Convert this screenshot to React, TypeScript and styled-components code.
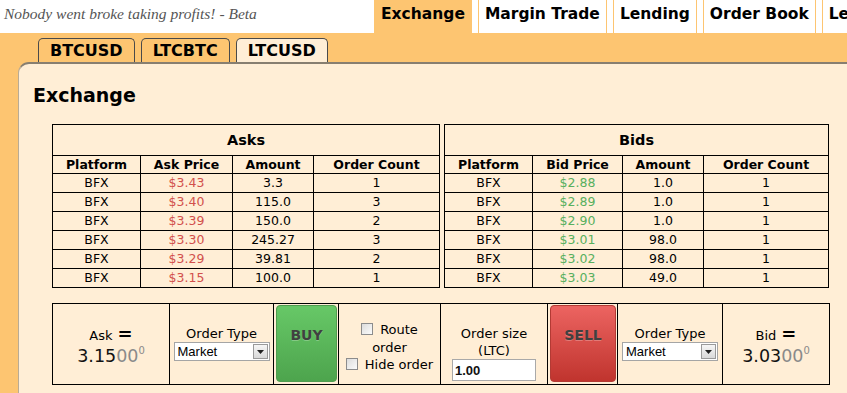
import React from 'react'
import styled, { createGlobalStyle } from 'styled-components'

const ORANGE = '#fdc571'
const CREAM = '#ffeed6'

const GlobalStyle = createGlobalStyle`
  html, body {
    margin: 0;
    padding: 0;
    background: ${ORANGE};
  }
  body {
    font-family: "DejaVu Sans", Verdana, sans-serif;
    color: #000;
    overflow: hidden;
  }
`

const Page = styled.div`
  width: 847px;
  height: 393px;
  overflow: hidden;
  background: ${ORANGE};
`

const TopBar = styled.div`
  display: flex;
  height: 33px;
  background: #fff;
  overflow: hidden;
`

const Tagline = styled.div`
  width: 374px;
  flex: none;
  box-sizing: border-box;
  padding-left: 4px;
  font-family: "Liberation Serif", "Times New Roman", serif;
  font-style: italic;
  font-size: 15.5px;
  line-height: 28px;
  color: #555;
  white-space: nowrap;
`

const NavTabs = styled.div`
  display: flex;
  gap: 6px;
`

const NavTab = styled.div<{ $active?: boolean }>`
  flex: none;
  padding: 0 6px;
  border-left: 1px solid ${ORANGE};
  border-right: 1px solid ${ORANGE};
  background: ${({ $active }) => ($active ? ORANGE : '#fff')};
  font-weight: bold;
  font-size: 15.5px;
  line-height: 29px;
  white-space: nowrap;
`

const SubBar = styled.div`
  display: flex;
  align-items: flex-end;
  gap: 6px;
  height: 29px;
  padding-left: 38px;
`

const SubTab = styled.div<{ $active?: boolean }>`
  height: 23px;
  padding: 0 11px;
  border: 1px solid #4a4a4a;
  border-bottom: none;
  border-radius: 5px 5px 0 0;
  background: ${({ $active }) => ($active ? CREAM : ORANGE)};
  font-weight: bold;
  font-size: 16px;
  line-height: 23px;
`

const Panel = styled.div`
  margin-left: 18px;
  height: 331px;
  box-sizing: border-box;
  padding-top: 20px;
  background: ${CREAM};
  border-top: 2px solid #877e70;
  border-left: 1px solid #b9ab94;
  border-top-left-radius: 11px;
`

const Heading = styled.h2`
  margin: 0 0 18px 14px;
  font-size: 19px;
  line-height: 22px;
  font-weight: bold;
`

const BooksRow = styled.div`
  display: flex;
  gap: 4px;
  padding-left: 33px;
`

const BookTable = styled.table<{ $width: number }>`
  width: ${({ $width }) => $width}px;
  border-collapse: collapse;
  table-layout: fixed;
  font-size: 12.5px;

  th, td {
    border: 1px solid #000;
    padding: 0;
    text-align: center;
  }
`

const TitleCell = styled.th`
  height: 30px;
  font-size: 14.5px;
`

const ColHead = styled.th`
  height: 17px;
  line-height: 15px;
  font-size: 12.5px;
`

const DataCell = styled.td<{ $tone?: 'ask' | 'bid' }>`
  height: 18px;
  line-height: 16px;
  color: ${({ $tone }) => ($tone === 'ask' ? '#d2504c' : $tone === 'bid' ? '#58b05e' : '#000')};
`

const OrderTable = styled.table`
  margin: 15px 0 0 33px;
  width: 777px;
  border-collapse: collapse;
  table-layout: fixed;
  font-size: 13px;

  td {
    border: 1px solid #000;
    padding: 0;
    text-align: center;
    vertical-align: top;
    height: 80px;
  }
`

const QuoteBox = styled.div`
  padding-top: 21px;
`

const QuoteLabel = styled.div`
  line-height: 17px;
`

const Equals = styled.span`
  font-weight: bold;
  font-size: 18px;
  margin-left: 5px;
`

const QuoteValue = styled.div`
  font-size: 17.5px;
  line-height: 24px;
  color: #111;
`

const Dim = styled.span`
  color: #8a8a8a;
`

const Sup = styled.sup`
  color: #8a8a8a;
  font-size: 10px;
  vertical-align: 8px;
  line-height: 0;
`

const FieldBox = styled.div<{ $top: number }>`
  padding-top: ${({ $top }) => $top}px;
  display: flex;
  flex-direction: column;
  align-items: center;
`

const FieldLabel = styled.div`
  line-height: 17px;
`

const SelectWrap = styled.div`
  position: relative;
  width: 96px;
  height: 19px;
`

const Select = styled.select`
  appearance: none;
  width: 96px;
  height: 19px;
  box-sizing: border-box;
  margin: 0;
  padding: 0 0 0 3px;
  border: 1px solid #a5a5a5;
  border-radius: 0;
  background: #fff;
  font-family: "Liberation Sans", Arial, sans-serif;
  font-size: 13px;
  color: #000;
`

const SelectArrow = styled.span`
  position: absolute;
  right: 2px;
  top: 2px;
  width: 15px;
  height: 15px;
  box-sizing: border-box;
  border: 1px solid #9a9a9a;
  background: linear-gradient(#f6f6f6, #d9d9d9);
  display: flex;
  align-items: center;
  justify-content: center;
  pointer-events: none;
`

const ActionButton = styled.button<{ $kind: 'buy' | 'sell' }>`
  display: flex;
  justify-content: center;
  align-items: flex-start;
  width: calc(100% - 3px);
  height: 77px;
  margin: 1px 0 0 2px;
  padding: 20px 0 0;
  border: 1px solid ${({ $kind }) => ($kind === 'buy' ? '#4f9c4f' : '#b33a34')};
  border-radius: 4px;
  background: ${({ $kind }) =>
    $kind === 'buy'
      ? 'linear-gradient(#67c867, #4da44d)'
      : 'linear-gradient(#ec6461, #c0342e)'};
  color: #404040;
  font-family: "DejaVu Sans", Verdana, sans-serif;
  font-weight: bold;
  font-size: 14px;
  line-height: 18px;
  text-shadow: 0 1px 0 rgba(255, 255, 255, 0.25);
`

const OptionsBox = styled.div`
  padding-top: 17px;
  line-height: 17.5px;
`

const Check = styled.input`
  appearance: none;
  width: 12px;
  height: 12px;
  margin: 0 7px -1px 0;
  border: 1px solid #8c8c8c;
  background: linear-gradient(135deg, #dcdcdc, #fbfbfb);
  vertical-align: baseline;
`

const SizeInput = styled.input`
  width: 84px;
  height: 22px;
  box-sizing: border-box;
  margin: 0;
  padding: 0 2px;
  border: 1px solid #a9a9a9;
  font-family: "Liberation Sans", Arial, sans-serif;
  font-size: 13px;
  font-weight: bold;
  color: #111;
  background: #fff;
`

const asks = [
  ['$3.43', '3.3', '1'],
  ['$3.40', '115.0', '3'],
  ['$3.39', '150.0', '2'],
  ['$3.30', '245.27', '3'],
  ['$3.29', '39.81', '2'],
  ['$3.15', '100.0', '1'],
]

const bids = [
  ['$2.88', '1.0', '1'],
  ['$2.89', '1.0', '1'],
  ['$2.90', '1.0', '1'],
  ['$3.01', '98.0', '1'],
  ['$3.02', '98.0', '1'],
  ['$3.03', '49.0', '1'],
]

const Book = ({ title, priceLabel, rows, tone, widths }: {
  title: string
  priceLabel: string
  rows: string[][]
  tone: 'ask' | 'bid'
  widths: number[]
}) => (
  <BookTable $width={widths.reduce((a, b) => a + b, 0)}>
    <colgroup>
      {widths.map((w, i) => <col key={i} style={{ width: w }} />)}
    </colgroup>
    <thead>
      <tr><TitleCell colSpan={4}>{title}</TitleCell></tr>
      <tr>
        <ColHead>Platform</ColHead>
        <ColHead>{priceLabel}</ColHead>
        <ColHead>Amount</ColHead>
        <ColHead>Order Count</ColHead>
      </tr>
    </thead>
    <tbody>
      {rows.map((r, i) => (
        <tr key={i}>
          <DataCell>BFX</DataCell>
          <DataCell $tone={tone}>{r[0]}</DataCell>
          <DataCell>{r[1]}</DataCell>
          <DataCell>{r[2]}</DataCell>
        </tr>
      ))}
    </tbody>
  </BookTable>
)

const OrderType = () => (
  <FieldBox $top={21}>
    <FieldLabel>Order Type</FieldLabel>
    <SelectWrap>
      <Select defaultValue="market">
        <option value="market">Market</option>
        <option value="limit">Limit</option>
      </Select>
      <SelectArrow>
        <svg width="7" height="4" viewBox="0 0 7 4"><path d="M0 0h7L3.5 4z" fill="#222" /></svg>
      </SelectArrow>
    </SelectWrap>
  </FieldBox>
)

const Quote = ({ label, main }: { label: string; main: string }) => (
  <QuoteBox>
    <QuoteLabel>{label}<Equals>=</Equals></QuoteLabel>
    <QuoteValue>{main}<Dim>00</Dim><Sup>0</Sup></QuoteValue>
  </QuoteBox>
)

export default function App() {
  return (
    <Page>
      <GlobalStyle />
      <TopBar>
        <Tagline>Nobody went broke taking profits! - Beta</Tagline>
        <NavTabs>
          <NavTab $active>Exchange</NavTab>
          <NavTab>Margin Trade</NavTab>
          <NavTab>Lending</NavTab>
          <NavTab>Order Book</NavTab>
          <NavTab>Leaderboard</NavTab>
        </NavTabs>
      </TopBar>
      <SubBar>
        <SubTab>BTCUSD</SubTab>
        <SubTab>LTCBTC</SubTab>
        <SubTab $active>LTCUSD</SubTab>
      </SubBar>
      <Panel>
        <Heading>Exchange</Heading>
        <BooksRow>
          <Book title="Asks" priceLabel="Ask Price" rows={asks} tone="ask" widths={[88, 92, 81, 126]} />
          <Book title="Bids" priceLabel="Bid Price" rows={bids} tone="bid" widths={[88, 90, 81, 125]} />
        </BooksRow>
        <OrderTable>
          <colgroup>
            <col style={{ width: 117 }} />
            <col style={{ width: 104 }} />
            <col style={{ width: 65 }} />
            <col style={{ width: 102 }} />
            <col style={{ width: 107 }} />
            <col style={{ width: 70 }} />
            <col style={{ width: 105 }} />
            <col style={{ width: 107 }} />
          </colgroup>
          <tbody>
            <tr>
              <td><Quote label="Ask" main="3.15" /></td>
              <td><OrderType /></td>
              <td><ActionButton $kind="buy">BUY</ActionButton></td>
              <td>
                <OptionsBox>
                  <label><Check type="checkbox" />Route</label><br />
                  order<br />
                  <label><Check type="checkbox" />Hide order</label>
                </OptionsBox>
              </td>
              <td>
                <FieldBox $top={21}>
                  <FieldLabel>Order size</FieldLabel>
                  <FieldLabel>(LTC)</FieldLabel>
                  <SizeInput defaultValue="1.00" />
                </FieldBox>
              </td>
              <td><ActionButton $kind="sell">SELL</ActionButton></td>
              <td><OrderType /></td>
              <td><Quote label="Bid" main="3.03" /></td>
            </tr>
          </tbody>
        </OrderTable>
      </Panel>
    </Page>
  )
}
